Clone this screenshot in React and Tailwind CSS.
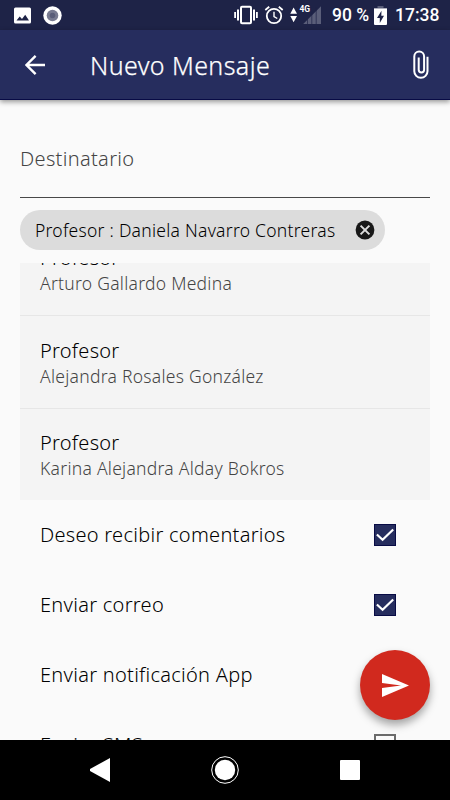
const recipients = [
  { role: 'Profesor', name: 'Arturo Gallardo Medina' },
  { role: 'Profesor', name: 'Alejandra Rosales González' },
  { role: 'Profesor', name: 'Karina Alejandra Alday Bokros' },
];

const options = [
  { label: 'Deseo recibir comentarios', checked: true },
  { label: 'Enviar correo', checked: true },
  { label: 'Enviar notificación App', checked: null },
  { label: 'Enviar SMS', checked: false },
];

function StatusBar() {
  return (
    <div className="flex h-[30px] shrink-0 items-center bg-[#1e2347] font-['Roboto',sans-serif] text-[17.5px] font-medium text-white">
      <svg className="ml-[14px] h-[17px] w-[17px] shrink-0" viewBox="0 0 17 17">
        <rect width="17" height="16" y="0.5" rx="1.5" fill="#fff" />
        <path d="M2.5 13.5 5.7 9.5 8 12l3.2-4.3 3.8 5.8z" fill="#1e2347" />
      </svg>
      <svg className="ml-3 h-[19px] w-[19px] shrink-0" viewBox="0 0 19 19">
        <circle cx="9.5" cy="9.5" r="9.2" fill="#fff" />
        <circle cx="9.5" cy="9.5" r="5.8" fill="#787b91" />
        <circle cx="9.5" cy="9.5" r="2.8" fill="#5a5e79" />
      </svg>
      <svg className="ml-[172px] h-[20px] w-[24px] shrink-0" viewBox="0 0 24 20">
        <rect x="7" y="1.8" width="10" height="16.4" rx="1" fill="none" stroke="#fff" strokeWidth="2" />
        <path d="M4 4.5v11M20 4.5v11" stroke="#fff" strokeWidth="2" />
        <path d="M1.1 7v6M22.9 7v6" stroke="#fff" strokeWidth="1.8" />
      </svg>
      <svg className="ml-[6px] h-[20px] w-[20px] shrink-0" viewBox="0 0 20 20" fill="none" stroke="#fff">
        <circle cx="10" cy="11" r="7.2" strokeWidth="1.8" />
        <path d="M10 6.8V11.5l3.3 2" strokeWidth="1.4" />
        <path d="M1.3 5 5.2 1.7M18.7 5l-3.9-3.3" strokeWidth="1.8" />
      </svg>
      <svg className="ml-[6px] h-[22px] w-[34px] shrink-0" viewBox="0 0 34 22">
        <path d="M.3 9.8 3.6 3.5 7 9.8zM.3 12h6.7L3.6 18.3z" fill="#fff" />
        <text x="9.5" y="8" fill="#fff" fontSize="8.5" fontWeight="700" textLength="10.5">4G</text>
        <path d="M13.2 20 31 2.2V20z" fill="#5a5e79" />
        <path d="M17.5 10v10M21.8 6v14M26.2 3v17" stroke="#1e2347" strokeWidth="0.7" />
      </svg>
      <span className="ml-[8px] w-[38px] whitespace-nowrap text-[17.5px]">90 %</span>
      <svg className="ml-[4px] h-[19px] w-[13px] shrink-0" viewBox="0 0 13 19">
        <path d="M3.5 0h6v2H13v3H0V2h3.5z" fill="#5a5e79" />
        <path d="M0 2.5h13v15.5a1 1 0 0 1-1 1H1a1 1 0 0 1-1-1z" fill="#fff" />
        <path d="M7.5 4.8 3 12h2.8v5L10 9.7H7.3z" fill="#1e2347" />
      </svg>
      <span className="ml-[8px] whitespace-nowrap">17:38</span>
    </div>
  );
}

function Checkbox({ checked }) {
  if (!checked) return <span className="mr-[54px] h-[22px] w-[22px] border-2 border-[#6b6b6b]" />;
  return (
    <svg className="mr-[54px] h-[22px] w-[22px]" viewBox="0 0 22 22">
      <rect x="0.5" y="0.5" width="21" height="21" fill="#262d5e" stroke="#080b45" />
      <path d="m2.9 10.5 5.7 5.3L19.2 5.5" fill="none" stroke="#fff" strokeWidth="2.2" />
    </svg>
  );
}

export default function App() {
  return (
    <div className="relative flex h-[800px] w-[450px] flex-col overflow-hidden bg-[#fafafa] font-['Noto_Sans','Open_Sans',sans-serif] font-light text-black">
      <StatusBar />
      <header className="relative z-10 flex h-[70px] shrink-0 items-center border-b border-[#080b45] bg-[#262d5e] text-white shadow-[0_2px_5px_rgba(0,0,0,0.4)]">
        <svg className="ml-[25px] h-5 w-5" viewBox="0 0 20 20" fill="none" stroke="#fff" strokeWidth="2.4">
          <path d="M20 10H2M10.6.9 1.5 10l9.1 9.1" />
        </svg>
        <h1 className="ml-[45px] whitespace-nowrap text-[25px] leading-[34px] tracking-[0.42px] [-webkit-text-stroke:0.25px_white]">Nuevo Mensaje</h1>
        <svg className="ml-auto mr-[20px] h-[30px] w-[18px]" viewBox="0 0 18 30" fill="none" stroke="#fff" strokeWidth="2">
          <path d="M15.5 6.8v14.4a6.6 6.6 0 0 1-13.2 0V6.5a4.9 4.9 0 0 1 9.8 0v13.2a2.7 2.7 0 0 1-5.4 0V7.5" />
        </svg>
      </header>

      <main className="flex min-h-0 flex-1 flex-col overflow-hidden px-5">
        <div className="flex h-[98px] shrink-0 items-center border-b border-[#484848] pt-[20px] text-[20px] tracking-[0.32px] text-[#444]">
          <span className="whitespace-nowrap">Destinatario</span>
        </div>
        <div className="mt-3 flex h-10 w-[365px] shrink-0 items-center rounded-full bg-[#dcdcdc] pl-[15px] pr-[10px] text-[17.5px] tracking-[0.26px]">
          <span className="whitespace-nowrap">Profesor : Daniela Navarro Contreras</span>
          <svg className="ml-auto h-5 w-5" viewBox="0 0 20 20">
            <circle cx="10" cy="10" r="9.4" fill="#181818" />
            <path d="m5.6 5.6 8.8 8.8m0-8.8-8.8 8.8" stroke="#dcdcdc" strokeWidth="2" />
          </svg>
        </div>

        <ul className="mt-[12.5px] flex h-[237.5px] shrink-0 flex-col justify-end overflow-hidden bg-[#f4f4f4]">
          {recipients.map((r, i) => (
            <li
              key={r.name}
              className={`flex shrink-0 flex-col pl-5 pt-[20.5px] ${i < 2 ? 'h-[92.5px] border-b border-[#e6e6e6]' : 'h-[91.5px]'}`}
            >
              <span className="text-[20px] leading-[27px] tracking-[0.27px]">{r.role}</span>
              <span className="whitespace-nowrap text-[17.5px] leading-[25px] tracking-[0.27px] text-[#444]">{r.name}</span>
            </li>
          ))}
        </ul>

        {options.map((o) => (
          <div key={o.label} className="flex h-[70px] shrink-0 items-center justify-between pl-5 text-[20px] leading-[28px] tracking-[0.28px]">
            <span className="whitespace-nowrap">{o.label}</span>
            <span className="-mr-5 flex">{o.checked !== null && <Checkbox checked={o.checked} />}</span>
          </div>
        ))}
      </main>

      <nav className="flex h-[60px] shrink-0 items-center bg-black">
        <svg className="ml-[90px] h-6 w-5" viewBox="0 0 20 24">
          <path d="M20 0v24L0 13v-2z" fill="#fff" />
        </svg>
        <svg className="ml-[101px] h-7 w-7" viewBox="0 0 28 28">
          <circle cx="14" cy="14" r="13.3" fill="none" stroke="#fff" strokeWidth="1" />
          <circle cx="14" cy="14" r="10.2" fill="#fff" />
        </svg>
        <span className="ml-[101px] h-5 w-5 rounded-[1px] bg-white" />
      </nav>

      <button className="absolute right-5 top-[650px] flex h-[70px] w-[70px] items-center justify-center rounded-full bg-[#d1291e] shadow-[0_5px_9px_rgba(0,0,0,0.35)]">
        <svg className="h-[23px] w-[27px]" viewBox="0 0 27 23">
          <path d="M0 0 27 11.5 0 23v-9l19-2.5L0 9z" fill="#fff" />
        </svg>
      </button>
    </div>
  );
}
